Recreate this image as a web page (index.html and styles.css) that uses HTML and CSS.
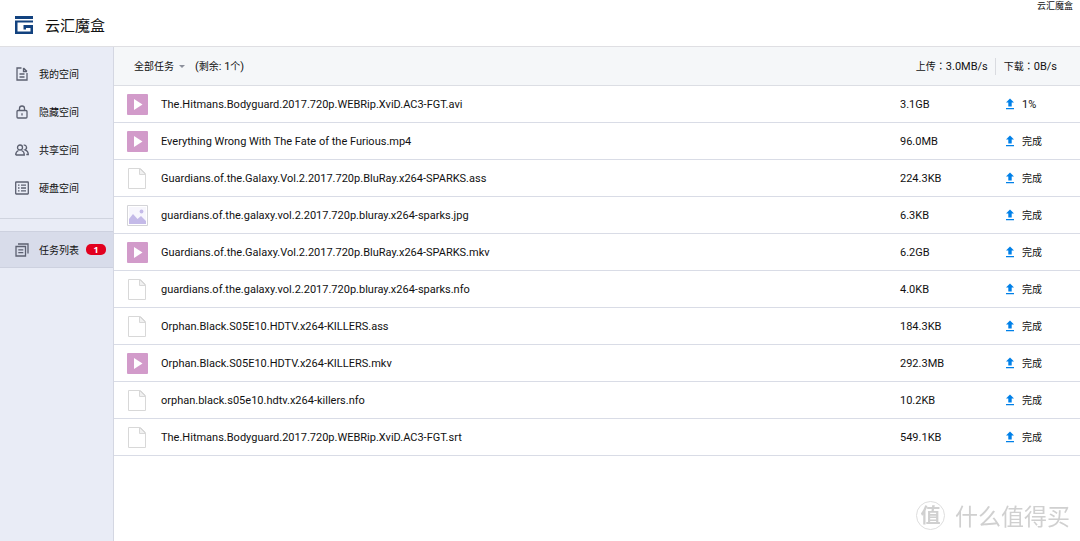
FILE: index.html
```html
<!DOCTYPE html>
<html lang="zh-CN">
<head>
<meta charset="utf-8">
<meta name="viewport" content="width=device-width, initial-scale=1">
<title>云汇魔盒</title>
<link rel="stylesheet" href="styles.css">
<script src="app.js" defer></script>
</head>
<body>
<svg class="sprite" aria-hidden="true">
  <symbol id="video" viewBox="0 0 21 21"><rect width="21" height="21" rx="1" fill="#d29bca"/><path d="M7 5l8.500 5.500L7 16z" fill="#fff"/></symbol>
  <symbol id="file" viewBox="0 0 21 21"><path d="M1.500 .5h12l5 5v15h-17z" fill="#fff" stroke="#d8d8d8"/><path d="M12.500 .5v6h6z" fill="#f1f1f1" stroke="#d8d8d8"/></symbol>
  <symbol id="image" viewBox="0 0 21 21"><path d="M.5.5h20v20H.5z" fill="#fff" stroke="#d4d4d8"/><path d="M2 2h17v17H2z" fill="#f7f6fd"/><path d="M2 14l4-5 4.500 5 3.500-3 5 5v3H2z" fill="#c4bae8"/><circle cx="14.500" cy="6.500" r="1.900" fill="#c4bae8"/></symbol>
  <symbol id="upload" viewBox="0 0 10 12"><path d="M5 .5l4 4H6.700v4H3.300v-4H1zM1 10h8v1.300H1z" fill="#0080e8"/></symbol>
</svg>
<header class="header">
  <svg class="logo" viewBox="0 0 18 18" aria-hidden="true"><path d="M0 0h18v3H0zM0 4.500h18v2H2.500v9h13v-3.500H11v1.500H8.500V9H18v9H0z" fill="#12427f"/></svg>
  <h1 class="brand">云汇魔盒</h1>
  <span class="account">云汇魔盒</span>
</header>
<div class="layout">
  <nav class="sidebar">
    <a class="nav-item" href="#mine"><svg class="nav-icon" viewBox="0 0 14 14"><path d="M6.500 1H2v12h10V6M8.500 1v3.500H12M8.500 1L12 4.500M4.500 7h5M4.500 10h5"/></svg>我的空间</a>
    <a class="nav-item" href="#hidden"><svg class="nav-icon" viewBox="0 0 14 14"><rect x="2" y="5.500" width="10" height="7.500" rx="1"/><path d="M4.500 5.500V3.500a2.500 2.500 0 015 0v2M7 8.300v2.200"/></svg>隐藏空间</a>
    <a class="nav-item" href="#shared"><svg class="nav-icon" viewBox="0 0 14 14"><circle cx="5" cy="4.500" r="2.500"/><path d="M.7 12c0-3 1.500-4 2.800-4.500M6.500 7.500C8 8 9.300 9.500 9.300 12H.7M8.700 2.200a2.400 2.400 0 011.300 4.600c2.200.8 3.300 2 3.300 4.700h-2"/></svg>共享空间</a>
    <a class="nav-item" href="#disk"><svg class="nav-icon" viewBox="0 0 14 14"><rect x=".7" y="1" width="12.600" height="12" rx=".5"/><path d="M3 4.200h1.500M6 4.200h5M3 7h1.500M6 7h5M3 9.800h1.500M6 9.800h5"/></svg>硬盘空间</a>
    <hr class="divider">
    <a class="nav-item active" href="#tasks" aria-current="page"><svg class="nav-icon" viewBox="0 0 14 14"><path d="M1 3.500h9.500V13H1zM3 1h10v9.500M3.300 6.800h5M3.300 9.600h5"/></svg>任务列表<span class="badge">1</span></a>
  </nav>
  <main class="main">
    <div class="toolbar">
      <button class="filter" type="button">全部任务<span class="caret"></span></button>
      <span>(<span class="han">剩余</span>: 1<span class="han">个</span>)</span>
      <div class="speeds"><span><span class="han">上传<span class="colon" lang="zh-TW">：</span></span>3.0MB/s</span><span class="download"><span class="han">下载<span class="colon" lang="zh-TW">：</span></span>0B/s</span></div>
    </div>
    <table class="tasks" aria-label="任务列表"><tbody id="task-rows"></tbody></table>
  </main>
</div>
<div class="watermark"><span class="seal">值</span>什么值得买</div>
</body>
</html>
```
FILE: styles.css
```css
* { box-sizing: border-box; }
body {
  margin: 0;
  min-height: 100vh;
  display: flex;
  flex-direction: column;
  background: #fff;
  color: #111;
  font: 11px/16px Roboto, "Noto Sans CJK SC", sans-serif;
}
.sprite { position: absolute; width: 0; height: 0; }
.header {
  display: flex;
  align-items: center;
  height: 47px;
  padding: 4px 7px 0 15px;
  border-bottom: 1px solid #dfdfe3;
}
.logo { width: 18px; height: 18px; }
.brand { margin: 0 0 0 12px; font: 400 15px/24px "Noto Sans CJK SC", sans-serif; }
.account { align-self: flex-start; margin: -6px 0 0 auto; font-size: 9px; }
.layout { display: flex; flex: 1; }
.sidebar {
  flex: 0 0 114px;
  padding-top: 8px;
  background: #e9ecf6;
  border-right: 1px solid #d4d7e2;
  font-family: "Noto Sans CJK SC", sans-serif;
}
.nav-item {
  display: flex;
  align-items: center;
  height: 37px;
  margin-bottom: 1px;
  padding-left: 15px;
  color: #111;
  font-size: 10px;
  text-decoration: none;
}
.nav-icon { width: 14px; height: 14px; margin-right: 10px; fill: none; stroke: #5c6070; stroke-width: 1.3; }
.divider { margin: 12px 0; border: 0; border-top: 1px solid #d0d4df; }
.active { background: #d8dcea; border: solid #cdd1df; border-width: 1px 0; }
.badge {
  width: 20px;
  height: 11px;
  margin-left: 7px;
  border-radius: 5px;
  background: #e2001e;
  color: #fff;
  font: 700 9px/11px "Noto Sans", sans-serif;
  text-align: center;
}
.main { flex: 1; min-width: 0; }
.toolbar {
  display: flex;
  align-items: center;
  height: 39px;
  padding: 1px 23px 0 20px;
  background: #f5f7f9;
  border-bottom: 1px solid #dcdee4;
}
.filter {
  display: flex;
  align-items: center;
  gap: 5px;
  margin-right: 10px;
  padding: 0;
  border: 0;
  background: none;
  color: inherit;
  font: inherit;
  font-size: 10px;
}
.caret { border: solid transparent; border-width: 3px 3px 0; border-top-color: #8c909c; }
.han { font-size: 10px; }
.colon { font-family: "Noto Sans CJK TC", sans-serif; }
.speeds { display: flex; margin-left: auto; }
.download { margin-left: 7px; padding-left: 8px; border-left: 1px solid #d9dbe0; }
.tasks { width: 100%; border-spacing: 0; table-layout: fixed; }
.tasks td { height: 37px; padding: 2px 0 0; border-bottom: 1px solid #d9dce6; }
.tasks .icon-cell { width: 47px; padding: 0 0 0 13px; }
.tasks .size-cell { width: 105px; }
.tasks .status-cell { width: 75px; padding: 0; }
.file-icon { display: block; width: 21px; height: 21px; }
.status { display: flex; align-items: center; gap: 7px; }
.status-text { padding-top: 2px; }
.done { font-size: 10px; }
.upload-icon { width: 10px; height: 12px; }
.watermark {
  position: fixed;
  right: 10px;
  bottom: 9px;
  display: flex;
  align-items: center;
  gap: 10px;
  color: #d0d0d0;
  font: 23px/34px "Noto Sans CJK SC", sans-serif;
}
.seal {
  width: 29px;
  height: 29px;
  border: 1px solid #ddd;
  border-radius: 50%;
  font-size: 20px;
  font-weight: 700;
  line-height: 26px;
  text-align: center;
}
```
FILE: app.js
```js
const tasks = [
  ["video", "The.Hitmans.Bodyguard.2017.720p.WEBRip.XviD.AC3-FGT.avi", "3.1GB", "1%"],
  ["video", "Everything Wrong With The Fate of the Furious.mp4", "96.0MB", "完成"],
  ["file", "Guardians.of.the.Galaxy.Vol.2.2017.720p.BluRay.x264-SPARKS.ass", "224.3KB", "完成"],
  ["image", "guardians.of.the.galaxy.vol.2.2017.720p.bluray.x264-sparks.jpg", "6.3KB", "完成"],
  ["video", "Guardians.of.the.Galaxy.Vol.2.2017.720p.BluRay.x264-SPARKS.mkv", "6.2GB", "完成"],
  ["file", "guardians.of.the.galaxy.vol.2.2017.720p.bluray.x264-sparks.nfo", "4.0KB", "完成"],
  ["file", "Orphan.Black.S05E10.HDTV.x264-KILLERS.ass", "184.3KB", "完成"],
  ["video", "Orphan.Black.S05E10.HDTV.x264-KILLERS.mkv", "292.3MB", "完成"],
  ["file", "orphan.black.s05e10.hdtv.x264-killers.nfo", "10.2KB", "完成"],
  ["file", "The.Hitmans.Bodyguard.2017.720p.WEBRip.XviD.AC3-FGT.srt", "549.1KB", "完成"]
];
document.getElementById("task-rows").innerHTML = tasks.map(([type, name, size, status]) => `
  <tr>
    <td class="icon-cell"><svg class="file-icon"><use href="#${type}"/></svg></td>
    <td>${name}</td>
    <td class="size-cell">${size}</td>
    <td class="status-cell"><div class="status"><svg class="upload-icon"><use href="#upload"/></svg><span class="status-text ${status === "完成" ? "done" : ""}">${status}</span></div></td>
  </tr>`).join("");
```
